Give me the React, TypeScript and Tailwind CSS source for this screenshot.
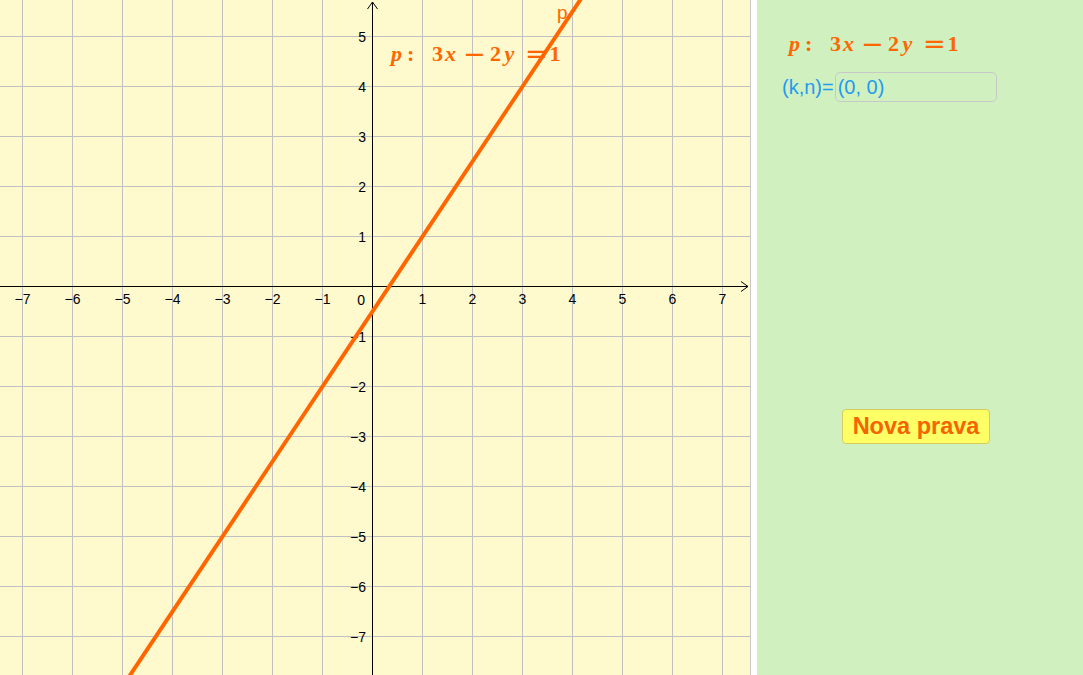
import React from "react";

const OX = 372.5;
const OY = 286.5;
const U = 50;

const minus = (k: number) => (k < 0 ? "\u2212" + Math.abs(k) : String(k));

function Formula() {
  return (
    <div className="flex items-baseline text-[22px] leading-none font-bold text-[#ff6600] font-['Liberation_Serif',serif]">
      <span className="w-[13px] shrink-0 text-center italic">p</span>
      <span className="ml-[4px] w-[5px] shrink-0 text-center">:</span>
      <span className="ml-[20px] w-[11px] shrink-0 text-center">3</span>
      <span className="w-[15px] shrink-0 text-center italic">x</span>
      <span className="ml-[5px] w-[19px] shrink-0 translate-y-[2px] text-center text-[27px] font-normal font-['DejaVu_Sans',sans-serif]">{"\u2212"}</span>
      <span className="ml-[8px] w-[11px] shrink-0 text-center">2</span>
      <span className="ml-[1px] w-[15px] shrink-0 text-center italic">y</span>
      <span className="ml-[8px] w-[18px] shrink-0 translate-y-[2px] text-center text-[27px] font-normal font-['DejaVu_Sans',sans-serif]">=</span>
      <span className="ml-[5px] w-[14px] shrink-0 text-center">1</span>
    </div>
  );
}

function Graph() {
  const cols = [-7, -6, -5, -4, -3, -2, -1, 1, 2, 3, 4, 5, 6, 7];
  const rows = [5, 4, 3, 2, 1, -1, -2, -3, -4, -5, -6, -7];
  // line 3x - 2y = 1  ->  y = (3x - 1) / 2
  const p1 = { x: OX + -5 * U, y: OY - ((3 * -5 - 1) / 2) * U };
  const p2 = { x: OX + 4.5 * U, y: OY - ((3 * 4.5 - 1) / 2) * U };

  return (
    <svg
      width={750}
      height={675}
      viewBox="0 0 750 675"
      className="block font-['Liberation_Sans',Arial,sans-serif]"
    >
      {cols.map((k) => (
        <line key={"v" + k} x1={OX + k * U} y1={0} x2={OX + k * U} y2={675} stroke="#c0c0c0" strokeWidth={1} />
      ))}
      {rows.map((k) => (
        <line key={"h" + k} x1={0} y1={OY - k * U} x2={750} y2={OY - k * U} stroke="#c0c0c0" strokeWidth={1} />
      ))}

      {/* axes */}
      <line x1={0} y1={OY} x2={748} y2={OY} stroke="#000" strokeWidth={1} />
      <polyline points={`741,${OY - 5} 748,${OY} 741,${OY + 5}`} fill="none" stroke="#000" strokeWidth={1} />
      <line x1={OX} y1={2} x2={OX} y2={675} stroke="#000" strokeWidth={1} />
      <polyline points={`${OX - 5},9 ${OX},2 ${OX + 5},9`} fill="none" stroke="#000" strokeWidth={1} />

      {cols.map((k) => (
        <text key={"xl" + k} x={OX + k * U} y={304} textAnchor="middle" fontSize={14} fill="#000">
          {minus(k)}
        </text>
      ))}
      {rows.map((k) => (
        <text key={"yl" + k} x={366} y={OY - k * U + 5} textAnchor="end" fontSize={14} fill="#000">
          {minus(k)}
        </text>
      ))}
      <text x={365} y={305} textAnchor="end" fontSize={14} fill="#000">
        0
      </text>

      <line x1={p1.x} y1={p1.y} x2={p2.x} y2={p2.y} stroke="#ff6600" strokeWidth={4} />
      <text x={557} y={19} fontSize={19} fill="#ff6600">
        p
      </text>
    </svg>
  );
}

export default function App() {
  return (
    <div className="flex w-[1083px] h-[675px] overflow-hidden bg-white">
      <div className="relative w-[751px] h-full shrink-0 bg-[#fffacd] border-r border-[#c8c8c8] overflow-hidden">
        <Graph />
        <div className="absolute left-[390px] top-[38px]">
          <Formula />
        </div>
      </div>
      <div className="w-[6px] shrink-0 bg-white" />
      <div className="flex flex-1 flex-col bg-[#d0f0c0] font-['Liberation_Sans',Arial,sans-serif]">
        <div className="pl-[31px] pt-[28px]">
          <Formula />
        </div>
        <div className="ml-[25px] mt-[17px] flex items-center">
          <span className="text-[20px] leading-none text-[#1f9bf0]">(k,n)=</span>
          <div className="ml-[1px] flex h-[30px] w-[162px] items-center rounded-[5px] border border-[#c8c8c8] pl-[2px] text-[20px] leading-none text-[#1f9bf0]">
            (0, 0)
          </div>
        </div>
        <button className="ml-[85px] mt-[307px] flex h-[35px] w-[148px] items-center justify-center rounded-[4px] border border-[#d6cc5a] bg-[#ffff66] text-[23.5px] leading-none font-bold text-[#f56400]">
          Nova prava
        </button>
      </div>
    </div>
  );
}
